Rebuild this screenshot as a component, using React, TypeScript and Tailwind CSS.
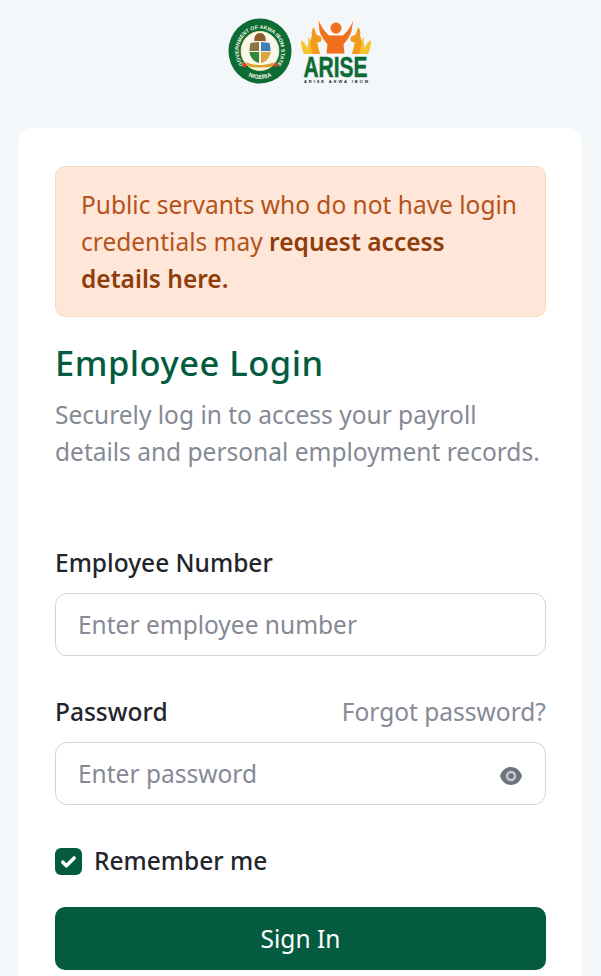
function SealLogo() {
  return (
    <svg width="64" height="66" viewBox="0 0 66 66" preserveAspectRatio="none">
      <defs>
        <path id="sealTop" d="M15.700 46.500A22 22 0 1 1 50.300 46.500" />
        <path id="sealBottom" d="M19 57.200A28 28 0 0 0 47 57.200" />
      </defs>
      <circle cx="33" cy="33" r="32.500" fill="#0d6b34" />
      <circle cx="33" cy="33" r="19.500" fill="#fbf7e8" stroke="#f4e7a8" strokeWidth="1" />
      <text fontSize="5.400" fontWeight="700" fill="#f4f7e6" fontFamily="'Liberation Sans', sans-serif">
        <textPath href="#sealTop" startOffset="50%" textAnchor="middle" textLength="98">GOVERNMENT OF AKWA IBOM STATE</textPath>
      </text>
      <text fontSize="6" fontWeight="700" fill="#f4f7e6" fontFamily="'Liberation Sans', sans-serif">
        <textPath href="#sealBottom" startOffset="50%" textAnchor="middle">NIGERIA</textPath>
      </text>
      <path d="M23 25l9-1v9H22z" fill="#8a7440" />
      <path d="M34 24l9 1 1 8H34z" fill="#3f7fb8" />
      <path d="M22 34h10v11c-5-1-9-5-10-11z" fill="#2f8a3c" />
      <path d="M34 34h10c-1 6-5 10-10 11z" fill="#d9a441" />
      <path d="M27 23c0-5 2-8 6-8s6 3 6 8z" fill="#8a5a2b" />
      <path d="M19 44c5 4 23 4 28 0l-1 4c-6 2-20 2-26 0z" fill="#d9a02a" />
      <circle cx="17" cy="47" r="2.200" fill="#d8402a" />
      <circle cx="49" cy="47" r="2.200" fill="#d8402a" />
    </svg>
  );
}

function AriseLogo() {
  return (
    <svg width="72" height="66" viewBox="0 0 72 66">
      <path d="M1 22c4 3 5 5 6 8 1-3 2-7 1-11 3 3 6 8 6 17H4c-2-4-3-9-3-14z" fill="#f5c32c" />
      <path d="M14 9c1 5 3 9 6 12l-3 3 3 12h-7c-3-7-3-14-1-19-1-3 0-6 2-8z" fill="#f39a1f" />
      <circle cx="18" cy="21" r="3.500" fill="#f39a1f" />
      <path d="M71 22c-4 3-5 5-6 8-1-3-2-7-1-11-3 3-6 8-6 17h10c2-4 3-9 3-14z" fill="#f5c32c" />
      <path d="M58 9c-1 5-3 9-6 12l3 3-3 12h7c3-7 3-14 1-19 1-3 0-6-2-8z" fill="#f39a1f" />
      <circle cx="54" cy="21" r="3.500" fill="#f39a1f" />
      <path d="M18 0c3 7 6 13 11 17h14c5-4 8-10 11-17l-2 13c-2 6-5 10-8 13l1 10H26l1-10c-3-3-6-7-8-13z" fill="#f0701e" stroke="#fff" strokeWidth="0.800" />
      <circle cx="36" cy="10" r="5.500" fill="#f0701e" />
      <text x="35.500" y="59" textAnchor="middle" fontSize="30" fontWeight="700" fill="#0c6b33" stroke="#0c6b33" strokeWidth="0.500" fontFamily="'Liberation Sans', sans-serif" textLength="64" lengthAdjust="spacingAndGlyphs">ARISE</text>
      <text x="36" y="65" textAnchor="middle" fontSize="4" fontWeight="700" fill="#222" fontFamily="'Liberation Sans', sans-serif" textLength="64">ARISE AKWA IBOM</text>
    </svg>
  );
}

export default function App() {
  return (
    <div className="h-[976px] overflow-hidden bg-[#f3f7fa] pr-[19px] pl-[18px] font-['Noto_Sans',sans-serif]">
      <div className="flex h-[128px] items-start justify-center gap-[8px] pt-[18px]">
        <SealLogo />
        <AriseLogo />
      </div>

      <div className="rounded-t-[14px] bg-white pt-[38px] pr-[36px] pb-[20px] pl-[37px]">
        <div className="rounded-[10px] border border-[#f9d9bb] bg-[#fee6d8] px-[25px] pt-[19px] pb-[19px] text-[24.500px] leading-[37px] text-[#b5531a]">
          Public servants who do not have login credentials may <span className="font-semibold text-[#8f3d0b]">request access details here.</span>
        </div>

        <h1 className="mt-[21px] text-[34.500px] leading-[50px] font-medium tracking-[0.5px] text-[#045b3f]">Employee Login</h1>
        <p className="mt-[8px] text-[24.500px] leading-[37px] text-[#858a94]">Securely log in to access your payroll details and personal employment records.</p>

        <label className="mt-[75px] block text-[24.500px] leading-[36px] font-medium text-[#22262c]">Employee Number</label>
        <div className="mt-[12px] flex h-[63px] items-center rounded-[12px] border border-[#d1d5db] px-[22px] pt-[2px] text-[24.500px] text-[#858a94]">Enter employee number</div>

        <div className="mt-[38px] flex items-center justify-between text-[24.500px] leading-[36px]">
          <span className="font-medium text-[#22262c]">Password</span>
          <span className="text-[#858a94]">Forgot password?</span>
        </div>
        <div className="mt-[12px] flex h-[63px] items-center justify-between rounded-[12px] border border-[#d1d5db] px-[22px] pt-[2px] text-[24.500px] text-[#858a94]">
          Enter password
          <svg className="mt-[3px]" width="24" height="24" viewBox="0 0 24 24" fill="#6f7380">
            <path d="M12 3C6.500 3 2.500 7 1 12c1.500 5 5.500 9 11 9s9.500-4 11-9c-1.500-5-5.500-9-11-9z" />
            <circle cx="12" cy="12" r="5.200" fill="#c9ccd3" />
            <circle cx="12" cy="12" r="2.800" />
          </svg>
        </div>

        <div className="mt-[38px] flex items-center gap-[12px]">
          <span className="flex h-[27px] w-[27px] items-center justify-center rounded-[6px] bg-[#045b3f]">
            <svg width="17" height="17" viewBox="0 0 24 24" fill="none" stroke="white" strokeWidth="5" strokeLinecap="round" strokeLinejoin="round">
              <path d="M4 13l5 5L20 7" />
            </svg>
          </span>
          <span className="text-[24.500px] leading-[36px] font-medium text-[#22262c]">Remember me</span>
        </div>

        <button className="mt-[28px] flex h-[63px] w-full items-center justify-center rounded-[10px] bg-[#045b3f] pt-[2px] text-[24.500px] text-white">Sign In</button>
      </div>
    </div>
  );
}
